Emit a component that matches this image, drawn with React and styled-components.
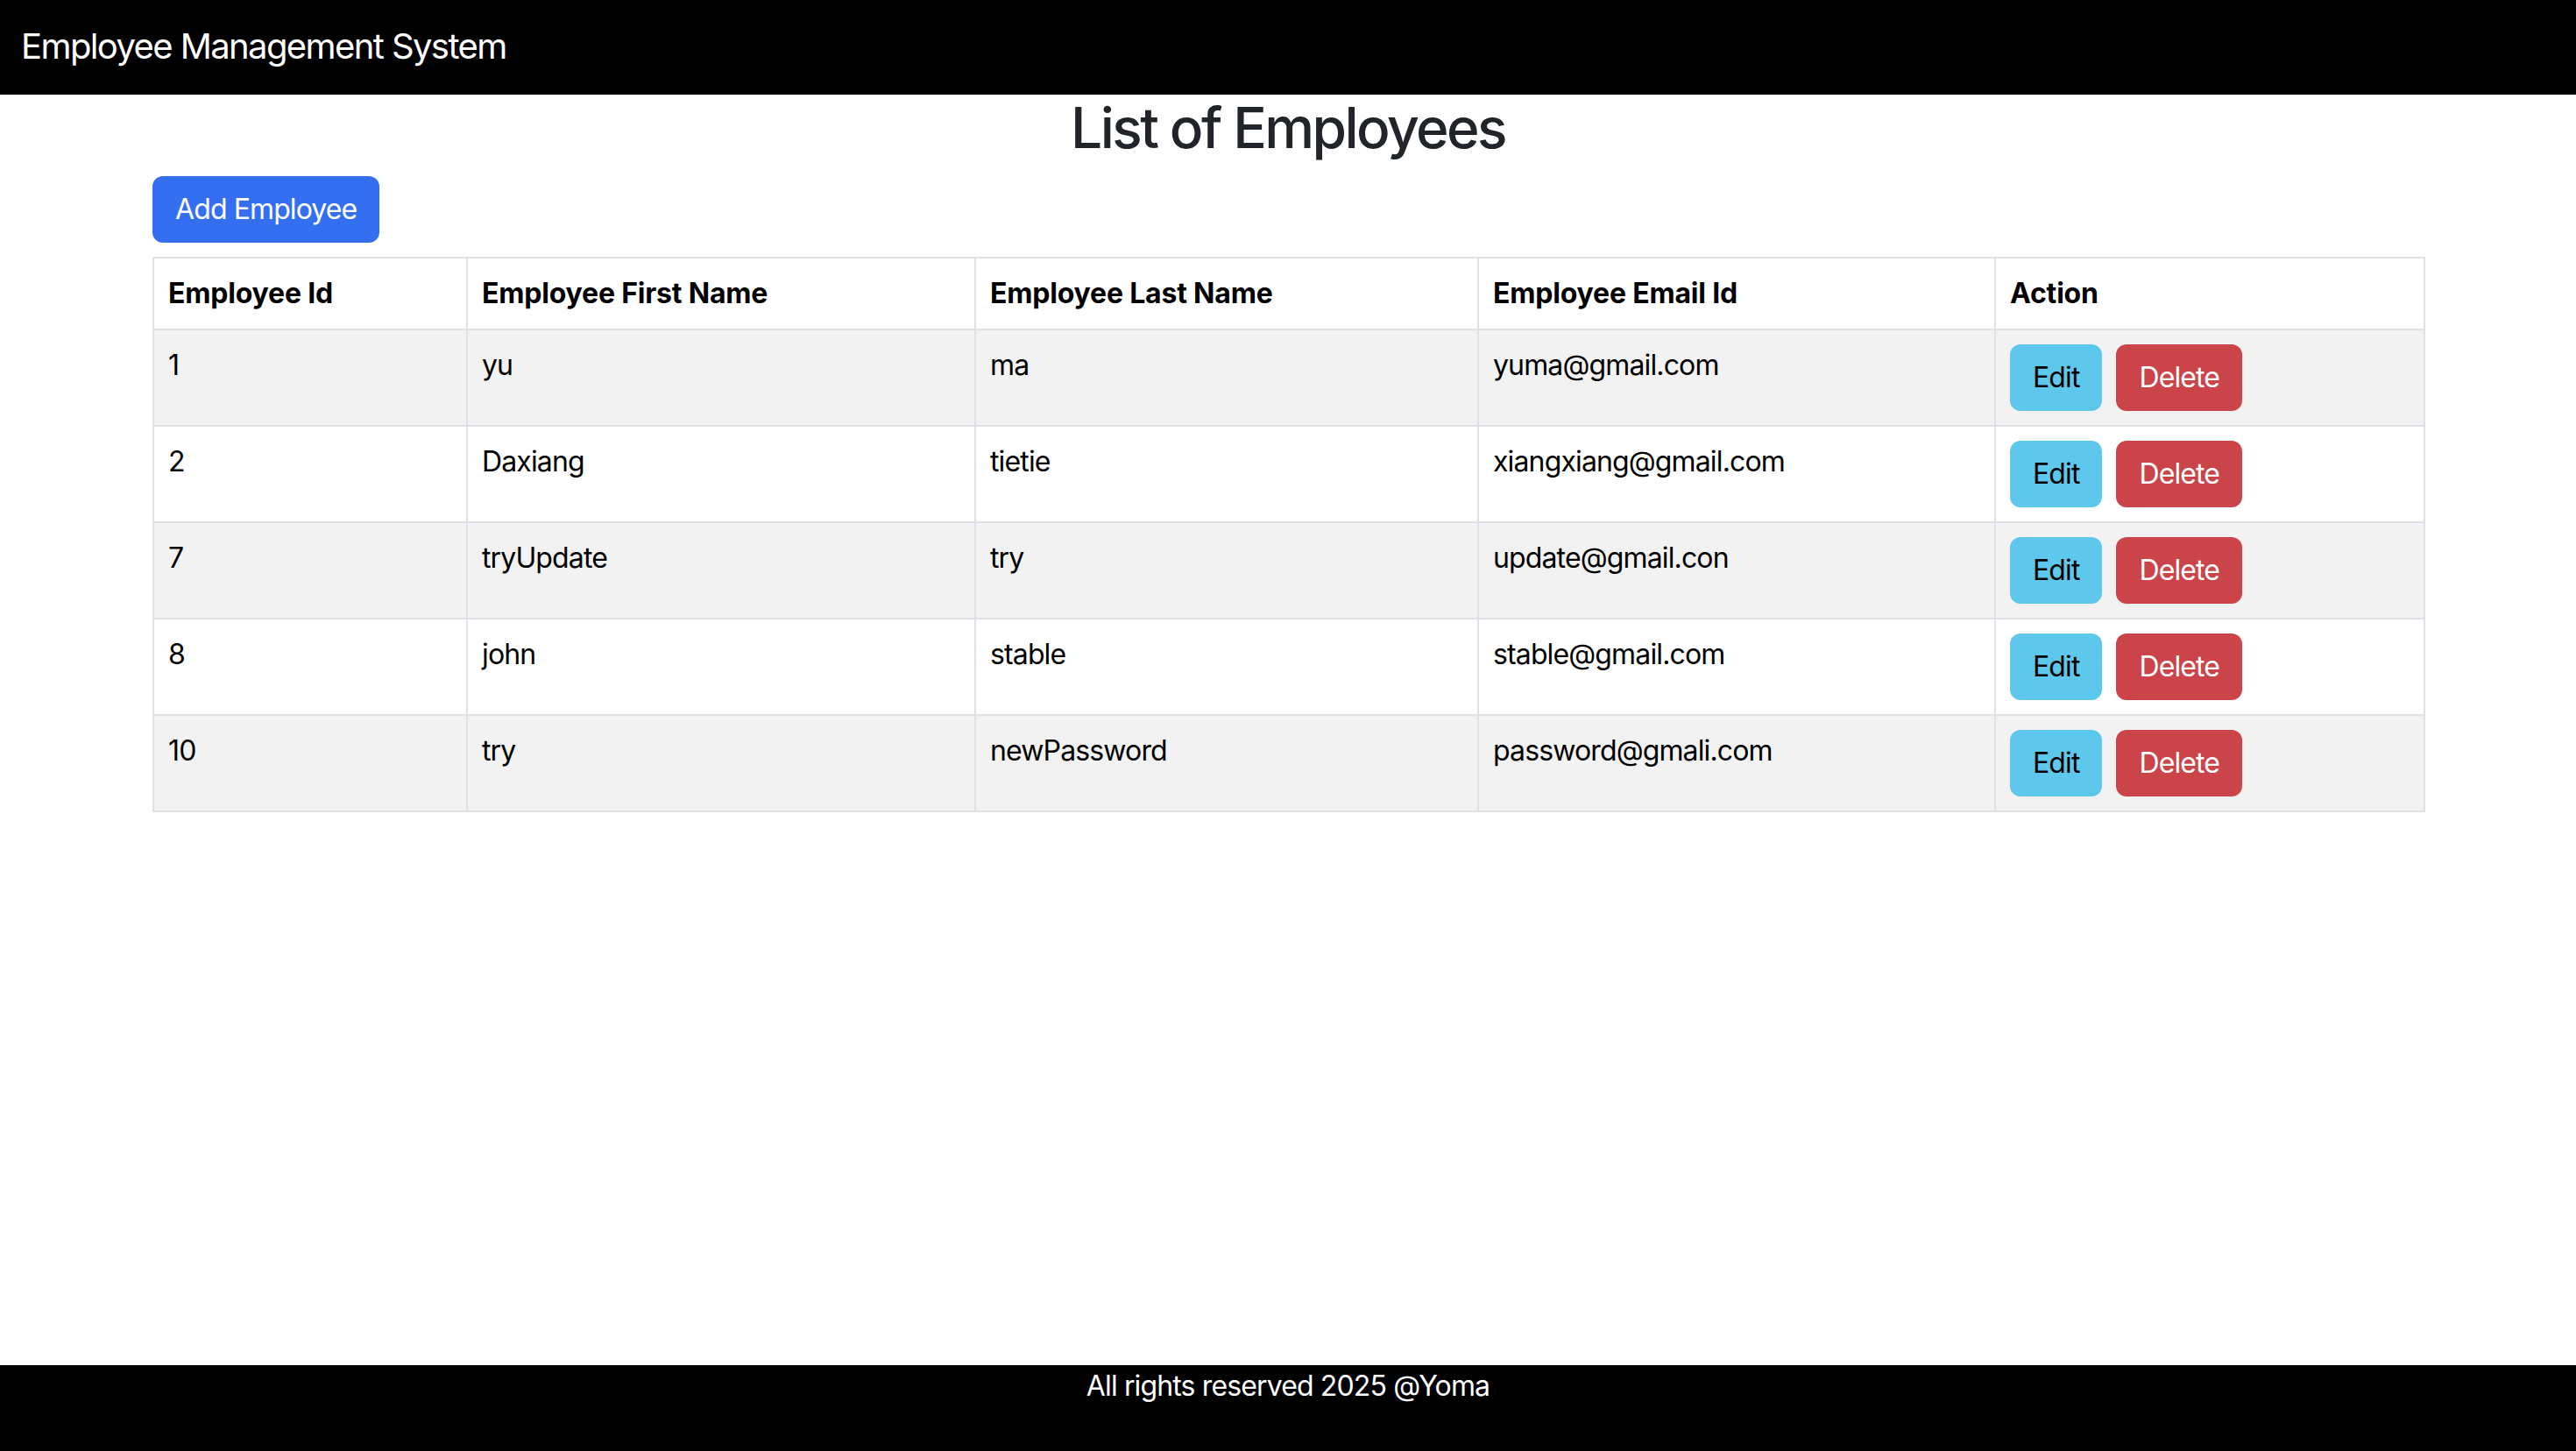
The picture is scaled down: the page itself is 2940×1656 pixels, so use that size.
import React from 'react';
import styled, { createGlobalStyle } from 'styled-components';

const GlobalStyle = createGlobalStyle`
  html, body {
    margin: 0;
    padding: 0;
    background: #fff;
  }
  body {
    font-family: Inter, "Noto Sans", "Liberation Sans", sans-serif;
    color: #212529;
  }
  * {
    box-sizing: border-box;
  }
`;

const employees = [
  { id: 1, firstName: 'yu', lastName: 'ma', email: 'yuma@gmail.com' },
  { id: 2, firstName: 'Daxiang', lastName: 'tietie', email: 'xiangxiang@gmail.com' },
  { id: 7, firstName: 'tryUpdate', lastName: 'try', email: 'update@gmail.con' },
  { id: 8, firstName: 'john', lastName: 'stable', email: 'stable@gmail.com' },
  { id: 10, firstName: 'try', lastName: 'newPassword', email: 'password@gmali.com' },
];

const columns = [
  { title: 'Employee Id', width: 358 },
  { title: 'Employee First Name', width: 580 },
  { title: 'Employee Last Name', width: 574 },
  { title: 'Employee Email Id', width: 590 },
  { title: 'Action', width: 490 },
];

const App = () => {
  return (
    <Page>
      <GlobalStyle />
      <Navbar>
        <Brand>Employee Management System</Brand>
      </Navbar>

      <Container>
        <Title>List of Employees</Title>
        <Toolbar>
          <Button variant="primary">Add Employee</Button>
        </Toolbar>

        <Table>
          <colgroup>
            {columns.map((c) => (
              <col key={c.title} style={{ width: c.width }} />
            ))}
          </colgroup>
          <thead>
            <tr>
              {columns.map((c) => (
                <HeadCell key={c.title}>{c.title}</HeadCell>
              ))}
            </tr>
          </thead>
          <tbody>
            {employees.map((emp, i) => (
              <Row key={emp.id} striped={i % 2 === 0}>
                <Cell>{emp.id}</Cell>
                <Cell>{emp.firstName}</Cell>
                <Cell>{emp.lastName}</Cell>
                <Cell>{emp.email}</Cell>
                <Cell>
                  <Actions>
                    <Button variant="info">Edit</Button>
                    <Button variant="danger">Delete</Button>
                  </Actions>
                </Cell>
              </Row>
            ))}
          </tbody>
        </Table>
      </Container>

      <Footer>All rights reserved 2025 @Yoma</Footer>
    </Page>
  );
};

export default App;

const Page = styled.div`
  min-height: 100vh;
  display: flex;
  flex-direction: column;
`;

const Navbar = styled.header`
  height: 108px;
  background: #000;
  display: flex;
  align-items: center;
  padding: 0 24px 3px;
`;

const Brand = styled.div`
  color: #fff;
  font-size: 40px;
  line-height: 60px;
  letter-spacing: -0.04em;
`;

const Container = styled.main`
  flex: 1;
  width: 100%;
  max-width: 2640px;
  margin: 0 auto;
  padding: 0 24px;
`;

const Title = styled.h2`
  margin: 0 0 16px;
  text-align: center;
  font-size: 64px;
  font-weight: 500;
  line-height: 1.2;
  letter-spacing: -0.04em;
  color: #212529;
`;

const Toolbar = styled.div`
  display: flex;
  margin-bottom: 16px;
`;

const buttonColors = {
  primary: { bg: '#346ff1', fg: '#fff' },
  info: { bg: '#5ec8ec', fg: '#000' },
  danger: { bg: '#cb444a', fg: '#fff' },
};

const Button = styled.button`
  font-family: inherit;
  font-size: 32px;
  line-height: 48px;
  letter-spacing: -0.028em;
  padding: 12px 24px;
  border: 2px solid transparent;
  border-radius: 12px;
  cursor: pointer;
  background: ${(p) => buttonColors[p.variant].bg};
  color: ${(p) => buttonColors[p.variant].fg};
`;

const Table = styled.table`
  width: 100%;
  table-layout: fixed;
  border-collapse: collapse;
  font-size: 32px;
  line-height: 48px;
  letter-spacing: -0.027em;
  color: #000;
`;

const HeadCell = styled.th`
  text-align: left;
  font-weight: 700;
  letter-spacing: -0.006em;
  padding: 16px;
  border: 2px solid #dee2e6;
  background: #fff;
`;

const Row = styled.tr`
  background: ${(p) => (p.striped ? '#f2f2f2' : '#fff')};
`;

const Cell = styled.td`
  padding: 16px;
  border: 2px solid #dee2e6;
  vertical-align: top;
`;

const Actions = styled.div`
  display: flex;
  gap: 16px;
`;

const Footer = styled.footer`
  height: 98px;
  background: #000;
  color: #fff;
  text-align: center;
  font-size: 32px;
  line-height: 48px;
  letter-spacing: -0.027em;
`;
